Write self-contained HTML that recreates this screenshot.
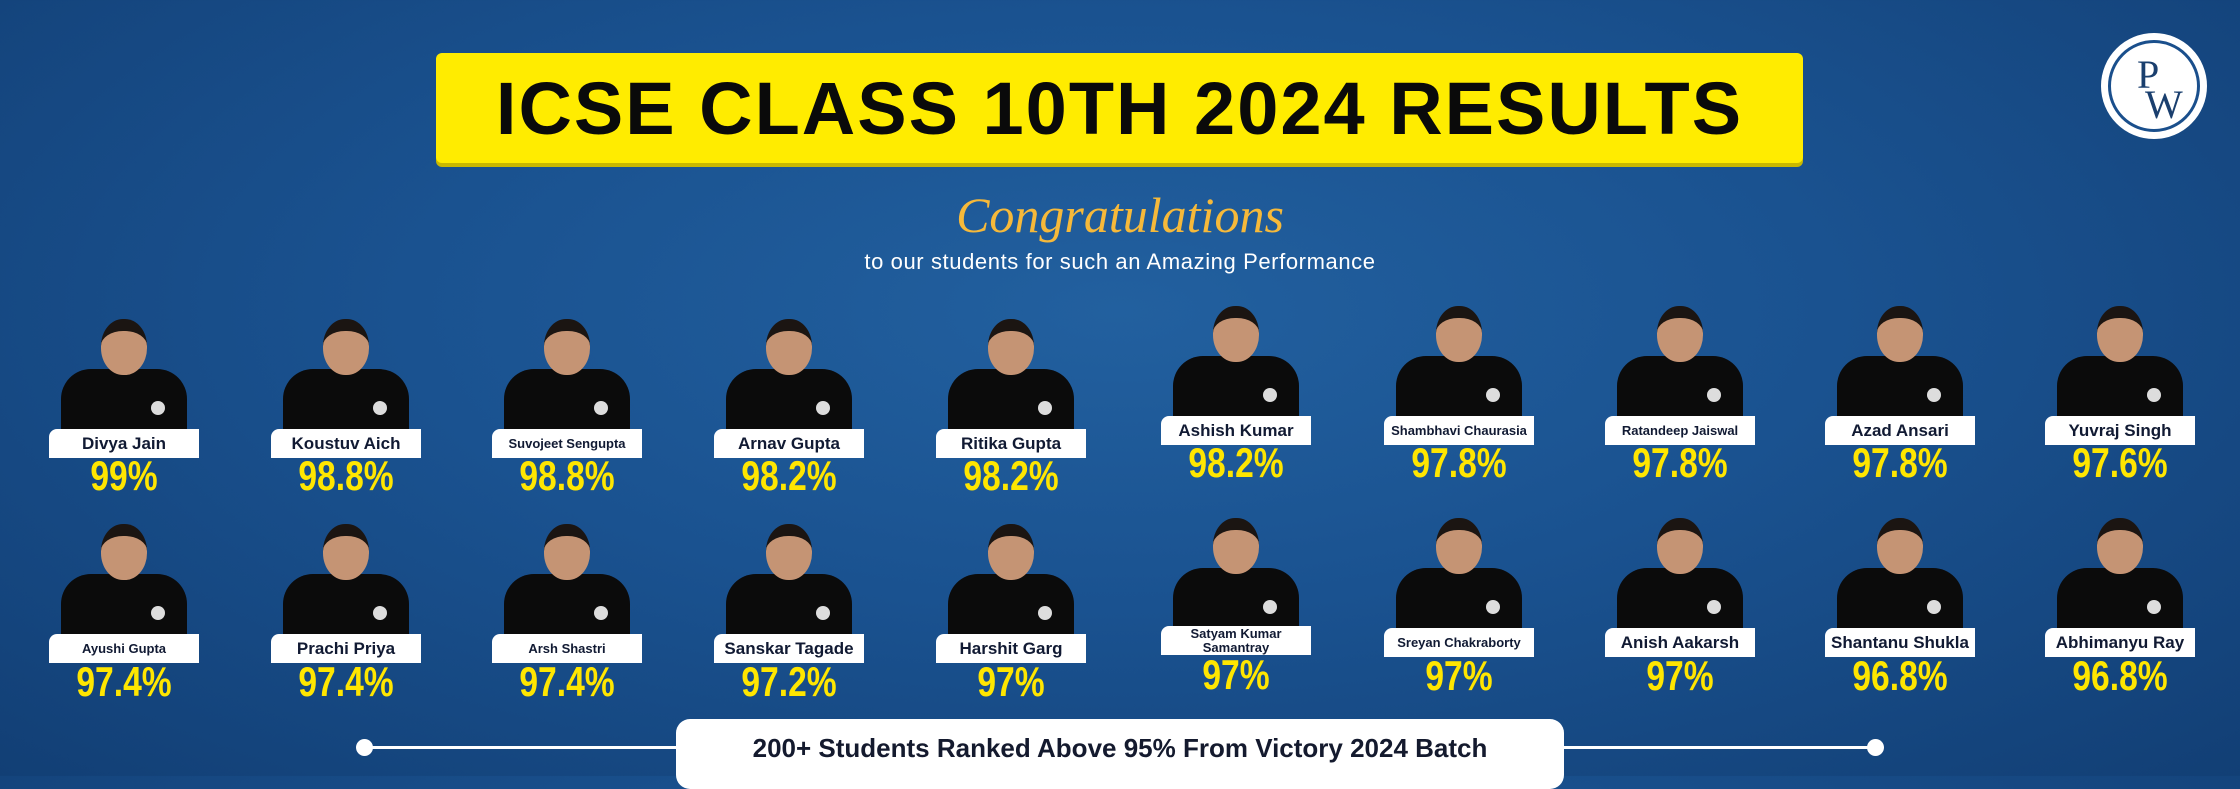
<!DOCTYPE html>
<html><head><meta charset="utf-8"><style>
*{margin:0;padding:0;box-sizing:border-box}
body{width:2240px;height:776px;overflow:hidden;font-family:"Liberation Sans",sans-serif;
background:radial-gradient(ellipse at 50% 40%,#22609f 0%,#1a5290 45%,#123f75 100%);position:relative}
.tb{position:absolute;left:436px;top:53px;width:1367px;height:110px;background:#ffec00;border-radius:6px;box-shadow:0 4px 0 #c9b800;
display:flex;align-items:center;justify-content:center;font-weight:900;font-size:74px;color:#0a0a0a;letter-spacing:2px}
.logo{position:absolute;left:2101px;top:33px;width:106px;height:106px;border-radius:50%;background:#fff;}
.logo i{position:absolute;left:7px;top:7px;width:92px;height:92px;border-radius:50%;border:3px solid #1a4f8c}
.logo b{position:absolute;font-family:"Liberation Serif",serif;font-weight:400;color:#1a3f6e;font-size:40px}
.cg{position:absolute;left:0;width:2240px;top:186px;text-align:center;font-family:"Liberation Serif",serif;font-style:italic;font-size:50px;color:#f6b93a}
.sub{position:absolute;left:0;width:2240px;top:249px;text-align:center;color:#fff;font-size:22px;letter-spacing:0.6px}
.c{position:absolute;width:200px;margin-left:-100px}
.p{position:absolute;left:37px;width:126px;height:118px;overflow:hidden}
.p .s{position:absolute;bottom:0;left:0;width:126px;height:60px;background:#0b0b0b;border-radius:30px 30px 0 0}
.p .n{position:absolute;left:50px;top:40px;width:26px;height:30px;background:#b78562}
.p .h{position:absolute;left:40px;top:8px;width:46px;height:56px;border-radius:48%;background:#c59474;border-top:12px solid #1b1512}
.p .l{position:absolute;right:22px;bottom:14px;width:14px;height:14px;border-radius:50%;background:#ddd}
.lb{position:absolute;left:25px;width:150px;height:29px;background:#fff;border-radius:8px 0 0 0;color:#111a33;font-weight:700;font-size:17px;text-align:center;line-height:29px;white-space:nowrap}
.lb.sm{font-size:13px}
.pc{position:absolute;left:0;width:200px;text-align:center;color:#ffe600;font-weight:900;font-size:42px;transform:scaleX(.8);line-height:36px}
.line{position:absolute;left:364px;top:746px;width:1512px;height:3px;background:#fff}
.dot{position:absolute;top:739px;width:17px;height:17px;border-radius:50%;background:#fff}
.pill{position:absolute;left:676px;top:719px;width:888px;height:70px;background:#fff;border-radius:14px;text-align:center;font-weight:700;font-size:26px;color:#141a2e;padding-top:14px}
</style></head><body>
<div class="tb">ICSE CLASS 10TH 2024 RESULTS</div>
<div class="logo"><i></i><b style="left:36px;top:18px">P</b><b style="left:44px;top:48px">W</b></div>
<div class="cg">Congratulations</div>
<div class="sub">to our students for such an Amazing Performance</div>

<div class="c" style="left:124px;top:0"><div class="p" style="top:311px"><div class="n"></div><div class="s"></div><div class="h"></div><div class="l"></div></div><div class="lb" style="top:429px">Divya Jain</div><div class="pc" style="top:458px">99%</div></div>
<div class="c" style="left:346px;top:0"><div class="p" style="top:311px"><div class="n"></div><div class="s"></div><div class="h"></div><div class="l"></div></div><div class="lb" style="top:429px">Koustuv Aich</div><div class="pc" style="top:458px">98.8%</div></div>
<div class="c" style="left:567px;top:0"><div class="p" style="top:311px"><div class="n"></div><div class="s"></div><div class="h"></div><div class="l"></div></div><div class="lb sm" style="top:429px">Suvojeet Sengupta</div><div class="pc" style="top:458px">98.8%</div></div>
<div class="c" style="left:789px;top:0"><div class="p" style="top:311px"><div class="n"></div><div class="s"></div><div class="h"></div><div class="l"></div></div><div class="lb" style="top:429px">Arnav Gupta</div><div class="pc" style="top:458px">98.2%</div></div>
<div class="c" style="left:1011px;top:0"><div class="p" style="top:311px"><div class="n"></div><div class="s"></div><div class="h"></div><div class="l"></div></div><div class="lb" style="top:429px">Ritika Gupta</div><div class="pc" style="top:458px">98.2%</div></div>
<div class="c" style="left:1236px;top:0"><div class="p" style="top:298px"><div class="n"></div><div class="s"></div><div class="h"></div><div class="l"></div></div><div class="lb" style="top:416px">Ashish Kumar</div><div class="pc" style="top:445px">98.2%</div></div>
<div class="c" style="left:1459px;top:0"><div class="p" style="top:298px"><div class="n"></div><div class="s"></div><div class="h"></div><div class="l"></div></div><div class="lb sm" style="top:416px">Shambhavi Chaurasia</div><div class="pc" style="top:445px">97.8%</div></div>
<div class="c" style="left:1680px;top:0"><div class="p" style="top:298px"><div class="n"></div><div class="s"></div><div class="h"></div><div class="l"></div></div><div class="lb sm" style="top:416px">Ratandeep Jaiswal</div><div class="pc" style="top:445px">97.8%</div></div>
<div class="c" style="left:1900px;top:0"><div class="p" style="top:298px"><div class="n"></div><div class="s"></div><div class="h"></div><div class="l"></div></div><div class="lb" style="top:416px">Azad Ansari</div><div class="pc" style="top:445px">97.8%</div></div>
<div class="c" style="left:2120px;top:0"><div class="p" style="top:298px"><div class="n"></div><div class="s"></div><div class="h"></div><div class="l"></div></div><div class="lb" style="top:416px">Yuvraj Singh</div><div class="pc" style="top:445px">97.6%</div></div>
<div class="c" style="left:124px;top:0"><div class="p" style="top:516px"><div class="n"></div><div class="s"></div><div class="h"></div><div class="l"></div></div><div class="lb sm" style="top:634px">Ayushi Gupta</div><div class="pc" style="top:664px">97.4%</div></div>
<div class="c" style="left:346px;top:0"><div class="p" style="top:516px"><div class="n"></div><div class="s"></div><div class="h"></div><div class="l"></div></div><div class="lb" style="top:634px">Prachi Priya</div><div class="pc" style="top:664px">97.4%</div></div>
<div class="c" style="left:567px;top:0"><div class="p" style="top:516px"><div class="n"></div><div class="s"></div><div class="h"></div><div class="l"></div></div><div class="lb sm" style="top:634px">Arsh Shastri</div><div class="pc" style="top:664px">97.4%</div></div>
<div class="c" style="left:789px;top:0"><div class="p" style="top:516px"><div class="n"></div><div class="s"></div><div class="h"></div><div class="l"></div></div><div class="lb" style="top:634px">Sanskar Tagade</div><div class="pc" style="top:664px">97.2%</div></div>
<div class="c" style="left:1011px;top:0"><div class="p" style="top:516px"><div class="n"></div><div class="s"></div><div class="h"></div><div class="l"></div></div><div class="lb" style="top:634px">Harshit Garg</div><div class="pc" style="top:664px">97%</div></div>
<div class="c" style="left:1236px;top:0"><div class="p" style="top:510px"><div class="n"></div><div class="s"></div><div class="h"></div><div class="l"></div></div><div class="lb sm" style="top:626px;line-height:14px;padding-top:1px">Satyam Kumar<br>Samantray</div><div class="pc" style="top:657px">97%</div></div>
<div class="c" style="left:1459px;top:0"><div class="p" style="top:510px"><div class="n"></div><div class="s"></div><div class="h"></div><div class="l"></div></div><div class="lb sm" style="top:628px">Sreyan Chakraborty</div><div class="pc" style="top:658px">97%</div></div>
<div class="c" style="left:1680px;top:0"><div class="p" style="top:510px"><div class="n"></div><div class="s"></div><div class="h"></div><div class="l"></div></div><div class="lb" style="top:628px">Anish Aakarsh</div><div class="pc" style="top:658px">97%</div></div>
<div class="c" style="left:1900px;top:0"><div class="p" style="top:510px"><div class="n"></div><div class="s"></div><div class="h"></div><div class="l"></div></div><div class="lb" style="top:628px">Shantanu Shukla</div><div class="pc" style="top:658px">96.8%</div></div>
<div class="c" style="left:2120px;top:0"><div class="p" style="top:510px"><div class="n"></div><div class="s"></div><div class="h"></div><div class="l"></div></div><div class="lb" style="top:628px">Abhimanyu Ray</div><div class="pc" style="top:658px">96.8%</div></div>

<div class="line"></div>
<div class="dot" style="left:356px"></div>
<div class="dot" style="left:1867px"></div>
<div class="pill">200+ Students Ranked Above 95% From Victory 2024 Batch</div>
</body></html>
